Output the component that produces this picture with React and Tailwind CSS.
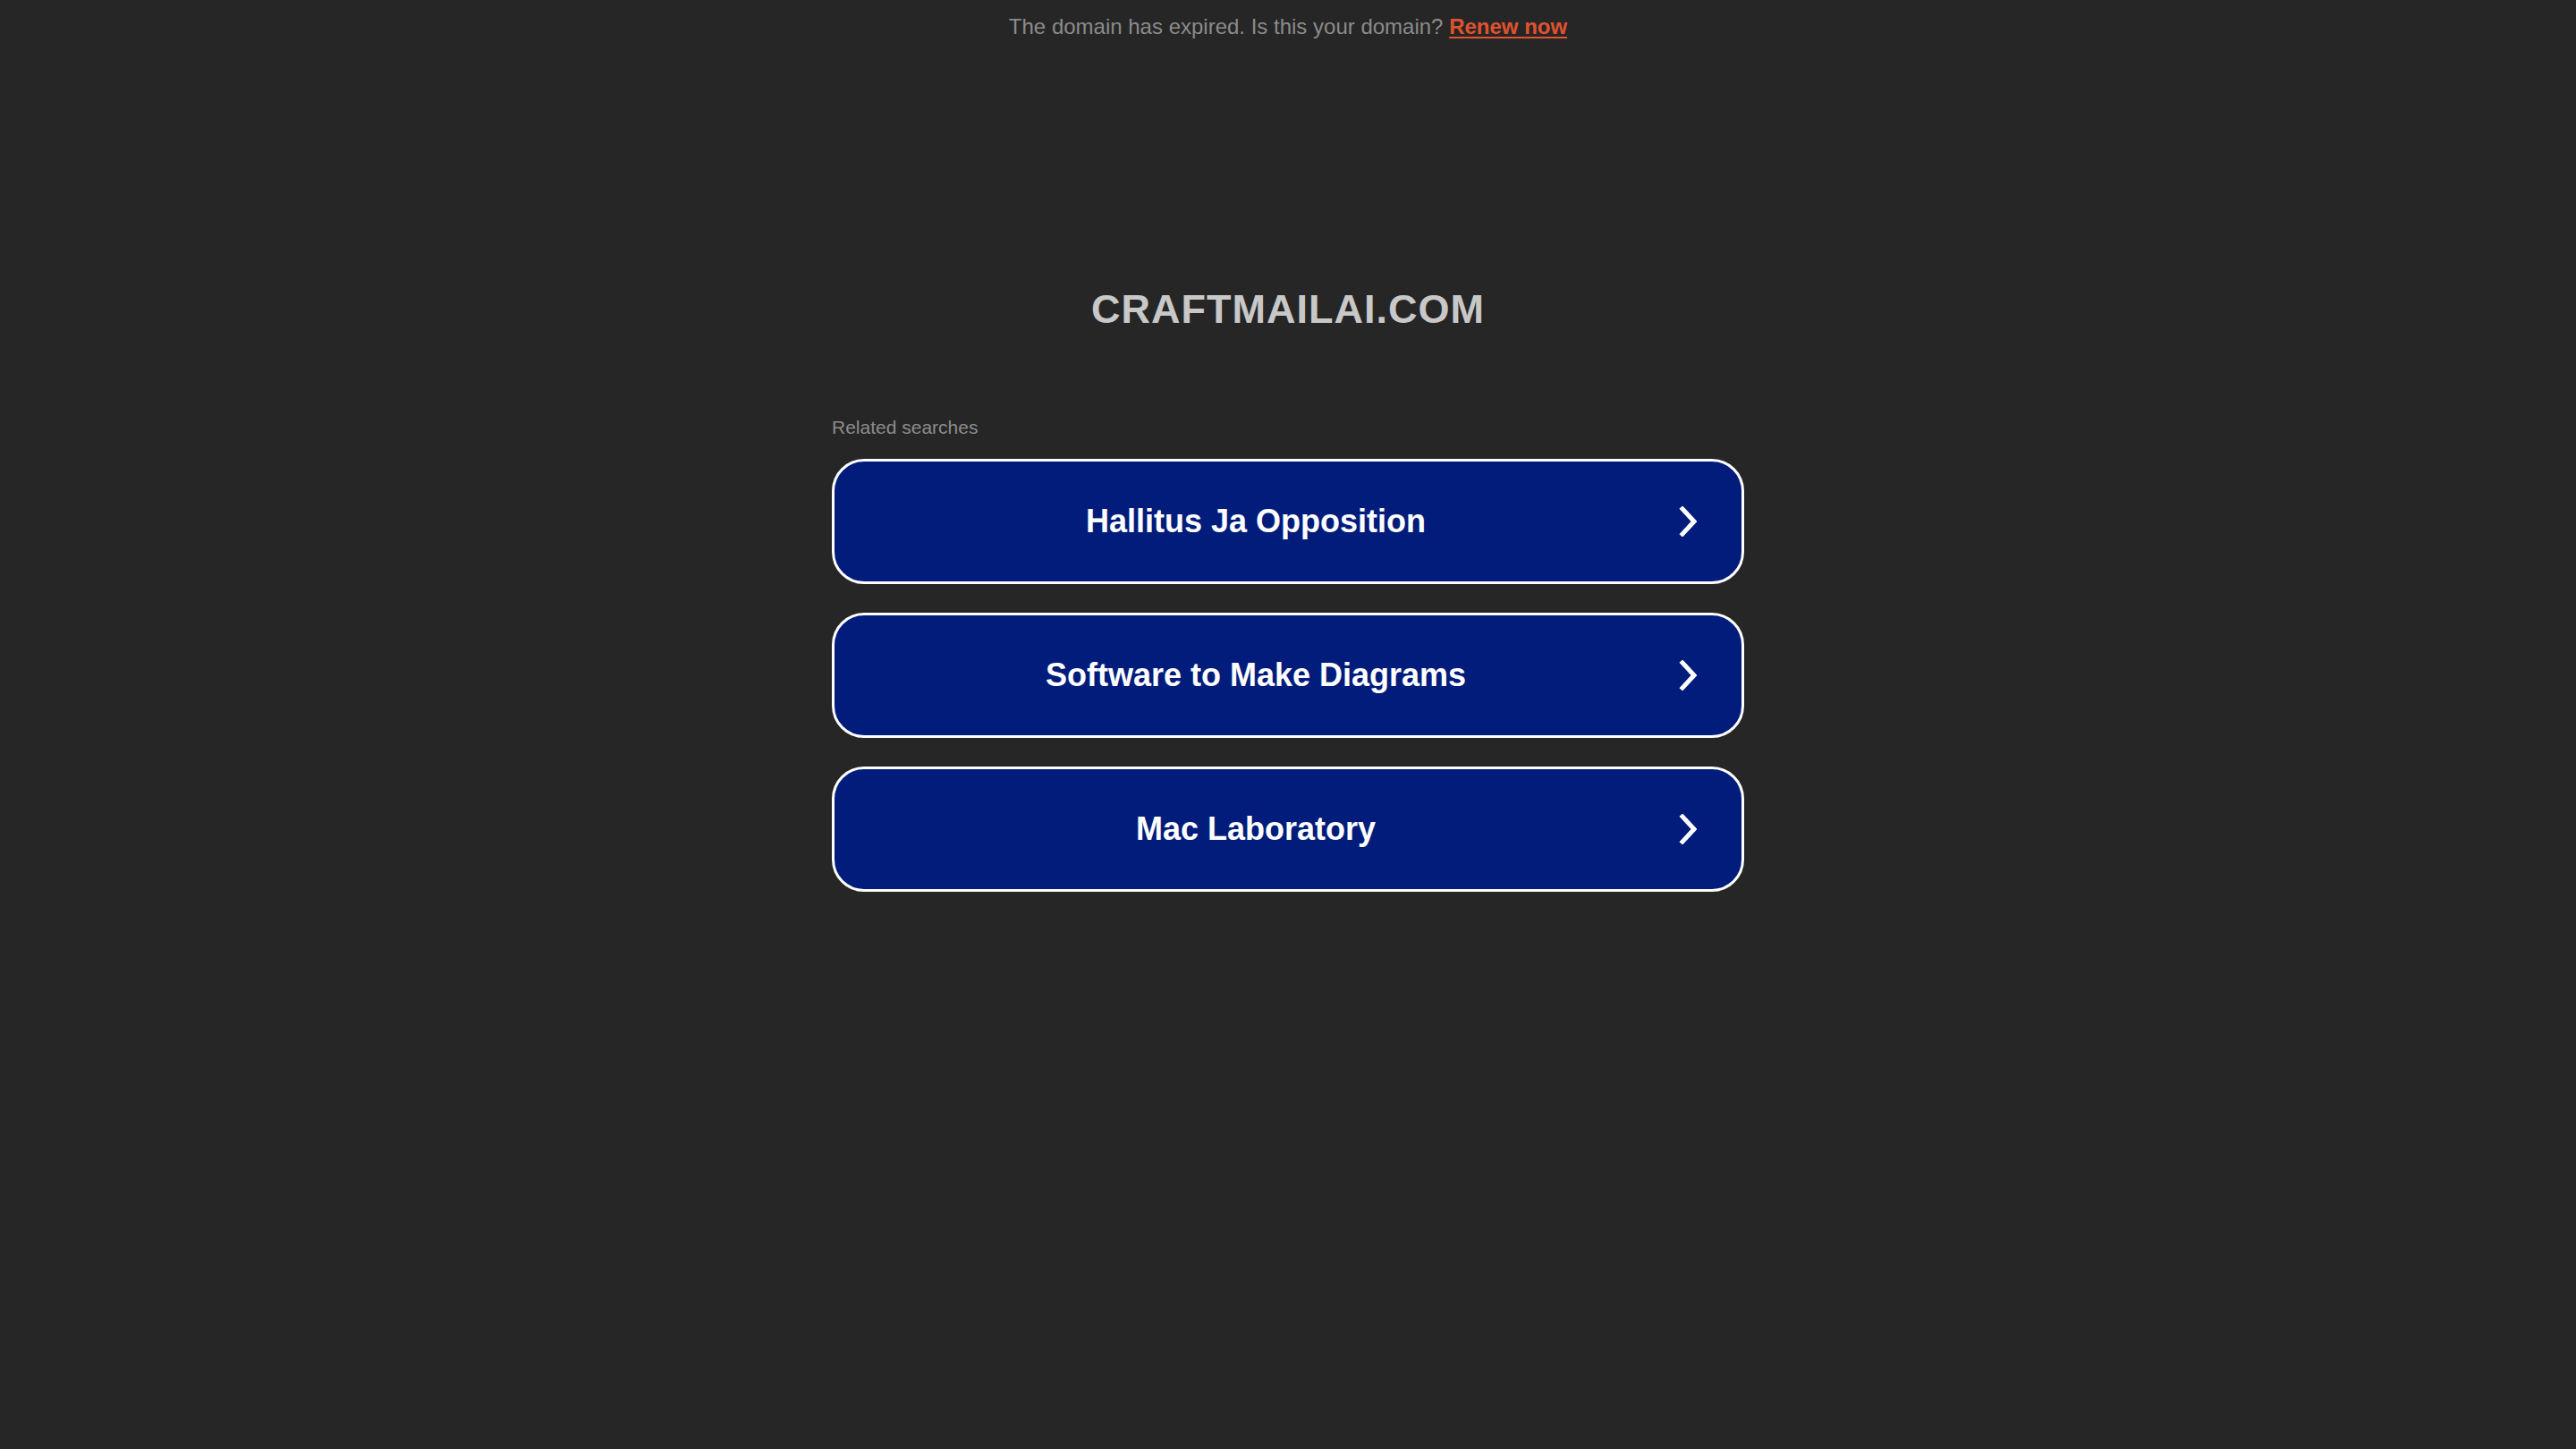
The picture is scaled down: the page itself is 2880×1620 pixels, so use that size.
import React from "react";

const searches = ["Hallitus Ja Opposition", "Software to Make Diagrams", "Mac Laboratory"];

const Chevron = () => (
  <svg width="22" height="34" viewBox="0 0 22 34" fill="none" className="shrink-0">
    <polyline
      points="6,3 19,17 6,31"
      stroke="white"
      strokeWidth="5"
      strokeLinecap="square"
      strokeLinejoin="miter"
    />
  </svg>
);

const App = () => {
  return (
    <div className="min-h-screen w-full bg-[#262626] font-['Liberation_Sans',Arial,sans-serif]">
      <div className="flex justify-center pt-[14px] text-[24px] leading-[32px] text-[#8b8b8b]">
        <p>
          The domain has expired. Is this your domain?{" "}
          <a href="#" className="font-bold text-[#e0522f] underline underline-offset-[3px]">
            Renew now
          </a>
        </p>
      </div>

      <h1 className="mt-[274px] text-center text-[45px] leading-[52px] font-bold tracking-[1px] text-[#c8c8c8]">
        CRAFTMAILAI.COM
      </h1>

      <div className="mx-auto mt-[94px] w-[1020px]">
        <p className="text-[21px] leading-[24px] text-[#8c8c8c]">Related searches</p>
        <div className="mt-[23px] flex flex-col gap-[32px]">
          {searches.map((s) => (
            <a
              key={s}
              href="#"
              className="flex h-[140px] items-center rounded-[36px] border-[3px] border-white bg-[#011c7b] pr-[50px]"
            >
              <span className="flex-1 text-center text-[36px] font-bold text-white">{s}</span>
              <Chevron />
            </a>
          ))}
        </div>
      </div>
    </div>
  );
};

export default App;
